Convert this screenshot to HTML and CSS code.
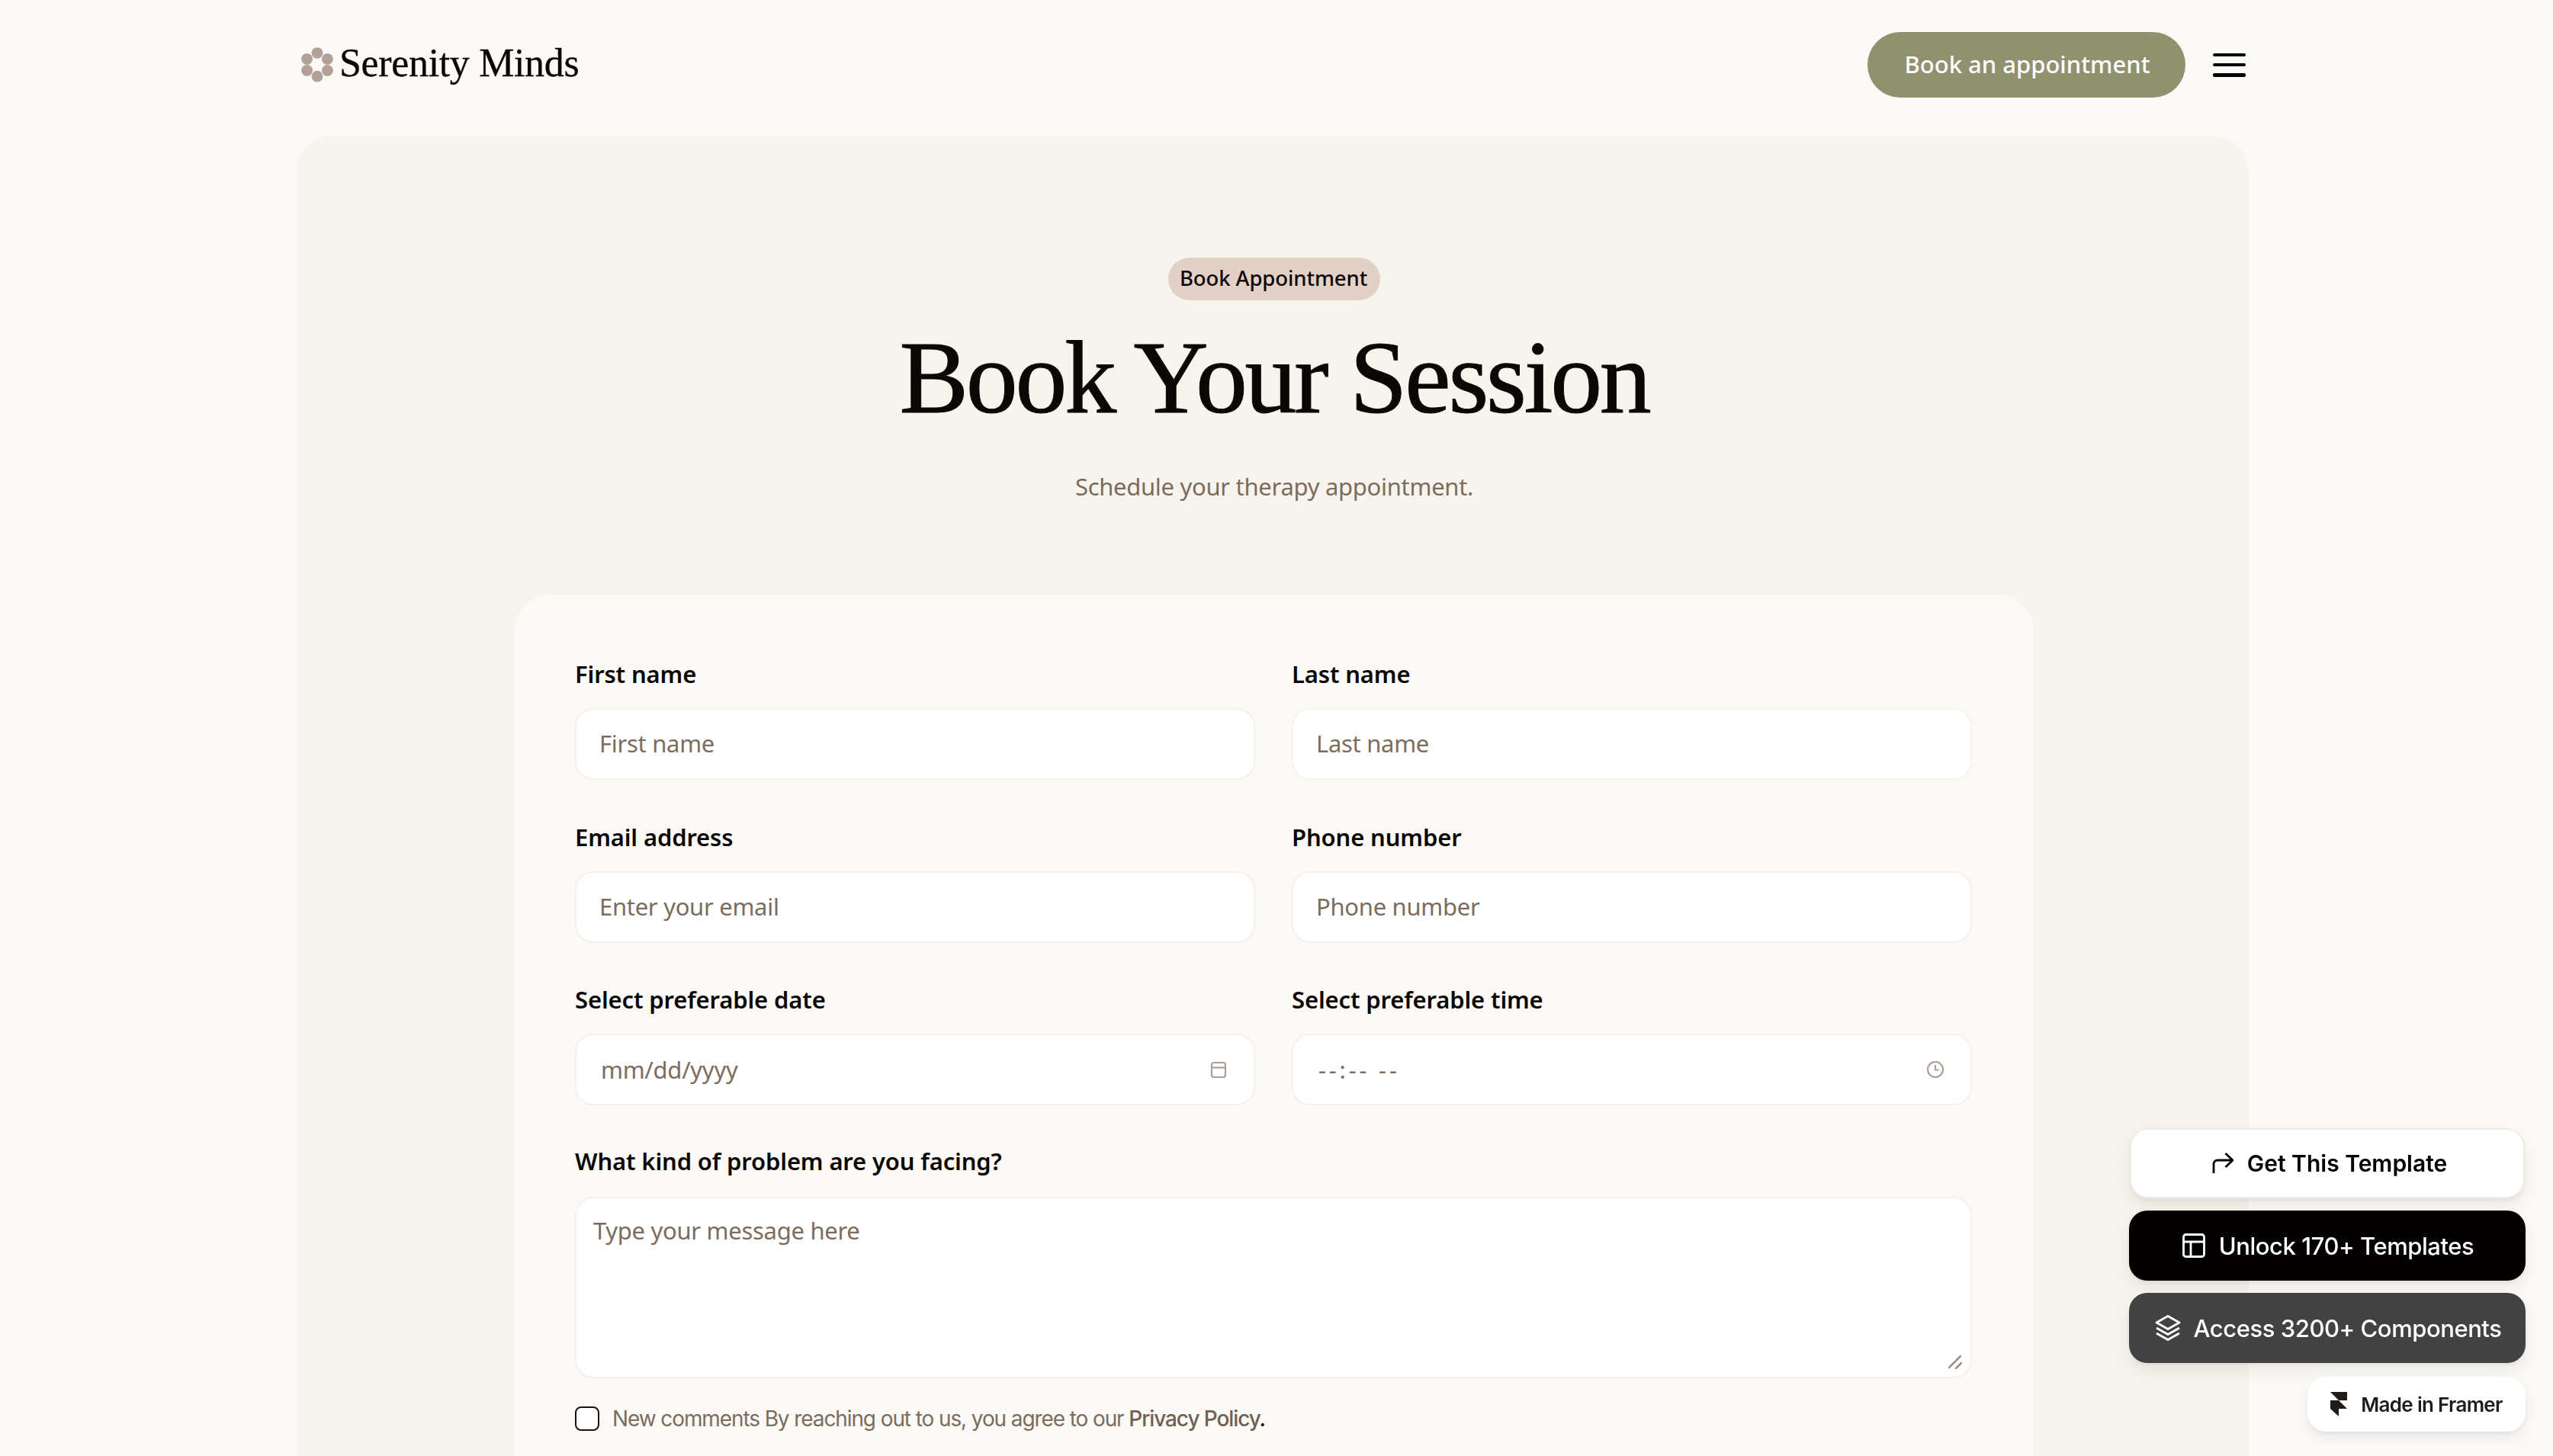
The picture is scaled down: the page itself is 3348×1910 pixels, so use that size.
FILE: index.html
```html
<!DOCTYPE html>
<html lang="en">
<head>
<meta charset="utf-8">
<title>Serenity Minds – Book Your Session</title>
<link rel="stylesheet" href="styles.css">
</head>
<body>
<div class="page">
  <header class="topbar">
    <a class="logo" href="#">
      <svg class="logo-mark" viewBox="0 0 42 46" aria-hidden="true">
        <circle cx="21" cy="7.6" r="7.4"/><circle cx="34.4" cy="15.4" r="7.4"/><circle cx="34.4" cy="30.4" r="7.4"/>
        <circle cx="21" cy="38.2" r="7.4"/><circle cx="7.6" cy="30.4" r="7.4"/><circle cx="7.6" cy="15.4" r="7.4"/>
      </svg>
      <span class="logo-text">Serenity Minds</span>
    </a>
    <div class="topbar-actions">
      <a class="cta" href="#">Book an appointment</a>
      <button class="burger" aria-label="Menu"><span></span><span></span><span></span></button>
    </div>
  </header>

  <main class="hero">
    <span class="badge">Book Appointment</span>
    <h1 class="title">Book Your Session</h1>
    <p class="subtitle">Schedule your therapy appointment.</p>

    <form class="form">
      <div class="grid">
        <label class="field"><span class="label">First name</span><span class="control"><input class="input" placeholder="First name"></span></label>
        <label class="field"><span class="label">Last name</span><span class="control"><input class="input" placeholder="Last name"></span></label>
        <label class="field"><span class="label">Email address</span><span class="control"><input class="input" placeholder="Enter your email"></span></label>
        <label class="field"><span class="label">Phone number</span><span class="control"><input class="input" placeholder="Phone number"></span></label>
        <label class="field"><span class="label">Select preferable date</span>
          <span class="control control-picker"><input class="input input-native" placeholder="mm/dd/yyyy">
            <svg class="picker-icon" viewBox="0 0 24 24" aria-hidden="true"><rect x="3" y="3" width="18" height="19" rx="3"/><path d="M3 9.5h18"/></svg>
          </span></label>
        <label class="field"><span class="label">Select preferable time</span>
          <span class="control control-picker"><input class="input input-native input-time" placeholder="--:-- --">
            <svg class="picker-icon" viewBox="0 0 24 24" aria-hidden="true"><circle cx="12" cy="12" r="10"/><path d="M12 6v6.5h4.5"/></svg>
          </span></label>
        <label class="field field-wide"><span class="label">What kind of problem are you facing?</span>
          <span class="control control-area"><textarea class="area" placeholder="Type your message here"></textarea>
            <svg class="resize-grip" viewBox="0 0 18 18" aria-hidden="true"><path d="M1 16L16 1M10 17l7-7"/></svg>
          </span></label>
      </div>
      <label class="consent">
        <span class="checkbox"></span>
        <span class="consent-text">New comments By reaching out to us, you agree to our <a href="#">Privacy Policy</a><b>.</b></span>
      </label>
    </form>
  </main>
</div>

<aside class="promo">
  <a class="promo-btn promo-light" href="#">
    <svg class="promo-icon arrow" viewBox="0 0 28 28" aria-hidden="true"><path d="M2 27V15a5 5 0 0 1 5-5h20M17.500 1L27 10l-9.500 9"/></svg>
    Get This Template</a>
  <a class="promo-btn promo-black" href="#">
    <svg class="promo-icon layout" viewBox="0 0 30 32" aria-hidden="true"><rect x="1.500" y="1.500" width="27" height="29" rx="3"/><path d="M1.500 11h27M11 11v19.500"/></svg>
    Unlock 170+ Templates</a>
  <a class="promo-btn promo-grey" href="#">
    <svg class="promo-icon stack" viewBox="0 0 34 34" aria-hidden="true"><path d="M17 1.500L32 10 17 18.500 2 10zM2 17l15 8.500L32 17M2 24l15 8.500L32 24"/></svg>
    Access 3200+ Components</a>
  <a class="framer-badge" href="#">
    <svg class="framer-mark" viewBox="0 0 22 32" aria-hidden="true"><path d="M0 0h22v11H11zM0 11h11l11 11H11v10L0 22z"/></svg>
    Made in Framer</a>
</aside>
</body>
</html>
```
FILE: styles.css
```css
* { box-sizing: border-box; }

html, body {
  margin: 0;
  height: 100%;
  overflow: hidden;
}

body {
  background: #fbfaf6;
  color: #0a0705;
  font-family: "Noto Sans", "Open Sans", sans-serif;
  padding-right: 10px;
}

a { color: inherit; text-decoration: none; }

.page {
  width: 2560px;
  margin: 0 auto;
}

/* Top bar */
.topbar {
  height: 178px;
  padding: 0 4px 8px 6px;
  display: flex;
  align-items: center;
  justify-content: space-between;
}

.logo { display: flex; align-items: center; gap: 8px; }
.logo-mark { width: 42px; height: 46px; fill: #b2a198; }
.logo-text {
  font-family: "Liberation Serif", serif;
  font-size: 52px;
  line-height: 60px;
  letter-spacing: -0.35px;
  padding-bottom: 4px;
  -webkit-text-stroke: 0.3px #0a0705;
}

.topbar-actions { display: flex; align-items: center; gap: 36px; }

.cta {
  width: 417px;
  height: 86px;
  padding: 0 0 2px 2px;
  border-radius: 43px;
  background: #90916f;
  color: #fff;
  font-size: 31px;
  font-weight: 500;
  display: flex;
  align-items: center;
  justify-content: center;
}

.burger {
  width: 43px;
  height: 31px;
  padding: 0;
  border: 0;
  background: none;
  display: flex;
  flex-direction: column;
  justify-content: space-between;
}
.burger span {
  display: block;
  height: 4.500px;
  border-radius: 2px;
  background: #000;
}

/* Hero */
.hero {
  background: #f7f4ee;
  border-radius: 48px;
  padding: 160px 282px 0 286px;
  display: flex;
  flex-direction: column;
  align-items: center;
  min-height: 1800px;
}

.badge {
  width: 278px;
  height: 56px;
  padding: 0 2px 3px 0;
  border-radius: 28px;
  background: #e3d0c6;
  font-size: 27.500px;
  font-weight: 500;
  display: flex;
  align-items: center;
  justify-content: center;
  letter-spacing: -0.1px;
}

.title {
  margin: 26px 0 0;
  font-family: "Liberation Serif", serif;
  font-weight: 400;
  font-size: 136px;
  line-height: 150px;
  letter-spacing: -3.300px;
  -webkit-text-stroke: 1px #0a0705;
}

.subtitle {
  margin: 46px 0 0;
  font-size: 31px;
  line-height: 44px;
  letter-spacing: -0.3px;
  color: #7b6c5e;
}

/* Form */
.form {
  align-self: stretch;
  margin-top: 120px;
  padding: 84px 81px 80px 79px;
  background: #fbfaf6;
  border-radius: 48px;
}

.grid {
  display: grid;
  grid-template-columns: 1fr 1fr;
  column-gap: 48px;
  row-gap: 54.500px;
}

.field { display: flex; flex-direction: column; gap: 25px; }
.field-wide { grid-column: 1 / -1; gap: 27px; }
.field-wide .label { margin-top: -2px; }

.label {
  font-size: 31px;
  line-height: 40px;
  font-weight: 600;
  letter-spacing: -0.15px;
  color: #0a0705;
}

.control {
  height: 94px;
  background: #fff;
  border: 2px solid #f5f2ec;
  border-radius: 24px;
  display: flex;
  align-items: center;
  padding: 0 30px 2px;
}

.control-picker { padding: 0 34px 0 30px; }

.input {
  flex: 1;
  min-width: 0;
  border: 0;
  outline: 0;
  padding: 0;
  background: none;
  font: 400 31px "Noto Sans", sans-serif;
  letter-spacing: -0.3px;
  color: #7b6c5e;
}
.input::placeholder, .area::placeholder { color: #7b6c5e; opacity: 1; }
.input-native { padding-left: 2px; }
.input-time { padding-left: 3px; letter-spacing: 3.800px; }

.picker-icon {
  width: 24px;
  height: 24px;
  fill: none;
  stroke: #ae9e94;
  stroke-width: 2.2;
}

.control-area {
  position: relative;
  height: 238px;
  align-items: stretch;
  padding: 22px 22px;
}

.area {
  flex: 1;
  border: 0;
  outline: 0;
  padding: 0;
  resize: none;
  background: none;
  font: 400 31px/40px "Noto Sans", sans-serif;
  letter-spacing: -0.3px;
  color: #7b6c5e;
}

.resize-grip {
  position: absolute;
  right: 11px;
  bottom: 10px;
  width: 18px;
  height: 18px;
  fill: none;
  stroke: #a08f85;
  stroke-width: 2.500;
  stroke-linecap: round;
}

.consent {
  margin-top: 36px;
  display: flex;
  align-items: center;
  gap: 17px;
}

.checkbox {
  width: 32px;
  height: 32px;
  border: 2px solid #1a1512;
  border-radius: 8px;
  background: #fff;
}

.consent-text {
  font-family: Inter, sans-serif;
  font-size: 28px;
  letter-spacing: -1.1px;
  color: #7b6c5e;
}
.consent-text a { font-weight: 500; color: #6f6052; }
.consent-text b { font-weight: 500; color: #0a0705; }

/* Floating promo */
.promo {
  position: fixed;
  right: 36px;
  bottom: 32px;
  width: 520px;
  display: flex;
  flex-direction: column;
  align-items: flex-end;
  gap: 16px;
  font-family: Inter, sans-serif;
}

.promo-btn {
  width: 520px;
  height: 92px;
  padding-left: 2px;
  border-radius: 24px;
  display: flex;
  align-items: center;
  justify-content: center;
  gap: 18px;
  font-size: 31px;
  font-weight: 500;
  letter-spacing: -0.45px;
  box-shadow: 0 10px 22px rgba(0, 0, 0, .07), 0 3px 5px rgba(0, 0, 0, .05);
}

.promo-light {
  background: #fff;
  color: #000;
  font-weight: 600;
  font-size: 30px;
  letter-spacing: 0;
  width: 518px;
  margin-right: 1px;
  padding-left: 6px;
  border: 2px solid #efece7;
}
.promo-black { background: #030000; color: #fff; }
.promo-grey { background: #424242; color: #fff; gap: 17px; }

.promo-icon { fill: none; stroke: currentColor; stroke-width: 2.800; }
.arrow { width: 28px; height: 28px; }
.layout { width: 30px; height: 32px; }
.stack { width: 34px; height: 34px; stroke-linejoin: round; }

.framer-badge {
  width: 286px;
  height: 72px;
  margin: 2px 0 0;
  border-radius: 24px;
  background: #fff;
  color: #1f1c1a;
  display: flex;
  align-items: center;
  justify-content: center;
  gap: 18px;
  font-size: 26px;
  font-weight: 600;
  letter-spacing: -0.7px;
  box-shadow: 0 8px 20px rgba(0, 0, 0, .07), 0 3px 5px rgba(0, 0, 0, .05);
}
.framer-mark { width: 22px; height: 32px; fill: #1f1c1a; }
```
